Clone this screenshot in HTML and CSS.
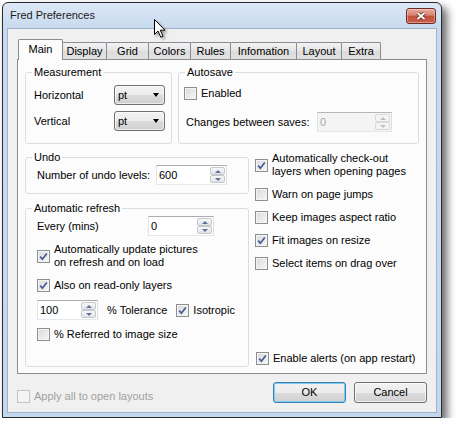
FILE: index.html
```html
<!DOCTYPE html>
<html lang="en">
<head>
    <meta charset="UTF-8">
    <title>Fred Preferences</title>
    <link rel="stylesheet" href="styles.css">
</head>
<body>

<div class="window">
    <div class="titlebar">
        <span class="title">Fred Preferences</span>
        <button type="button" class="close" title="Close">
            <svg width="12" height="10" viewBox="0 0 12 10">
                <path class="x-edge" d="M2.5 2 9.5 8 M9.5 2 2.5 8"/>
                <path class="x-mark" d="M2.5 2 9.5 8 M9.5 2 2.5 8"/>
            </svg>
        </button>
    </div>

    <div class="client">
        <div class="tabs">
            <span class="tab active">Main</span>
            <span class="tab">Display</span>
            <span class="tab">Grid</span>
            <span class="tab">Colors</span>
            <span class="tab">Rules</span>
            <span class="tab">Infomation</span>
            <span class="tab">Layout</span>
            <span class="tab">Extra</span>
        </div>

        <div class="page">
            <div class="top-row">
                <fieldset class="group measurement">
                    <legend>Measurement</legend>
                    <div class="group-body">
                        <div class="field-row">
                            <span>Horizontal</span>
                            <span class="combo">pt</span>
                        </div>
                        <div class="field-row">
                            <span>Vertical</span>
                            <span class="combo">pt</span>
                        </div>
                    </div>
                </fieldset>

                <fieldset class="group autosave">
                    <legend>Autosave</legend>
                    <div class="group-body">
                        <label class="check"><span class="box"></span>Enabled</label>
                        <div class="field-row saves">
                            <span class="saves-label">Changes between saves:</span>
                            <span class="spin disabled saves-spin">
                                <span class="spin-value">0</span>
                                <span class="spin-btns"><span class="spin-up"></span><span class="spin-down"></span></span>
                            </span>
                        </div>
                    </div>
                </fieldset>
            </div>

            <div class="columns">
                <div class="left-col">
                    <fieldset class="group undo">
                        <legend>Undo</legend>
                        <div class="group-body">
                            <div class="field-row">
                                <span class="undo-label">Number of undo levels:</span>
                                <span class="spin undo-spin">
                                    <span class="spin-value">600</span>
                                    <span class="spin-btns"><span class="spin-up"></span><span class="spin-down"></span></span>
                                </span>
                            </div>
                        </div>
                    </fieldset>

                    <fieldset class="group refresh">
                        <legend>Automatic refresh</legend>
                        <div class="group-body">
                            <div class="field-row">
                                <span class="every-label">Every (mins)</span>
                                <span class="spin every-spin">
                                    <span class="spin-value">0</span>
                                    <span class="spin-btns"><span class="spin-up"></span><span class="spin-down"></span></span>
                                </span>
                            </div>
                            <label class="check update-pics">
                                <span class="box"><svg class="tick" viewBox="0 0 11 11"><path d="M2.2 5.6 4.4 8.2 8.8 2.4"/></svg></span>
                                <span>Automatically update pictures<br>on refresh and on load</span>
                            </label>
                            <label class="check readonly">
                                <span class="box"><svg class="tick" viewBox="0 0 11 11"><path d="M2.2 5.6 4.4 8.2 8.8 2.4"/></svg></span>
                                Also on read-only layers
                            </label>
                            <div class="field-row tolerance">
                                <span class="spin tol-spin">
                                    <span class="spin-value">100</span>
                                    <span class="spin-btns"><span class="spin-up"></span><span class="spin-down"></span></span>
                                </span>
                                <span class="tol-label">% Tolerance</span>
                                <label class="check isotropic">
                                    <span class="box"><svg class="tick" viewBox="0 0 11 11"><path d="M2.2 5.6 4.4 8.2 8.8 2.4"/></svg></span>
                                    Isotropic
                                </label>
                            </div>
                            <label class="check">
                                <span class="box"></span>
                                % Referred to image size
                            </label>
                        </div>
                    </fieldset>
                </div>

                <div class="right-col">
                    <label class="check">
                        <span class="box"><svg class="tick" viewBox="0 0 11 11"><path d="M2.2 5.6 4.4 8.2 8.8 2.4"/></svg></span>
                        <span>Automatically check-out<br>layers when opening pages</span>
                    </label>
                    <label class="check"><span class="box"></span>Warn on page jumps</label>
                    <label class="check"><span class="box"></span>Keep images aspect ratio</label>
                    <label class="check">
                        <span class="box"><svg class="tick" viewBox="0 0 11 11"><path d="M2.2 5.6 4.4 8.2 8.8 2.4"/></svg></span>
                        Fit images on resize
                    </label>
                    <label class="check"><span class="box"></span>Select items on drag over</label>
                    <label class="check alerts">
                        <span class="box"><svg class="tick" viewBox="0 0 11 11"><path d="M2.2 5.6 4.4 8.2 8.8 2.4"/></svg></span>
                        Enable alerts (on app restart)
                    </label>
                </div>
            </div>
        </div>

        <div class="footer">
            <label class="check disabled"><span class="box"></span>Apply all to open layouts</label>
            <div class="buttons">
                <button type="button" class="btn default">OK</button>
                <button type="button" class="btn">Cancel</button>
            </div>
        </div>
    </div>
</div>

<svg class="cursor" width="16" height="22" viewBox="0 0 16 22">
    <path d="M1.5 1.5 L1.5 16.5 L5 13 L7.8 19.2 L10 18.2 L7.3 12.2 L12 12.2 Z"/>
</svg>

</body>
</html>
```

FILE: styles.css
```css
body {
    margin: 0;
    background: #fff;
    font-family: "Liberation Sans", Arial, sans-serif;
    font-size: 11px;
    line-height: 13px;
    color: #000;
}

.window {
    box-sizing: border-box;
    width: 440px;
    height: 416px;
    margin: 2px 0 0 2px;
    padding: 0 4px 4px;
    border: 1px solid #2c2c2c;
    border-radius: 6px 6px 0 0;
    background: linear-gradient(#dce8f6, #c8daef 25px, #c3d7ee);
    box-shadow: 5px 5px 8px rgba(0, 0, 0, 0.6);
    display: flex;
    flex-direction: column;
}

.titlebar {
    height: 25px;
    padding-left: 3px;
    display: flex;
    align-items: center;
    justify-content: space-between;
}

.title {
    color: #1a1a1a;
}

.close {
    width: 30px;
    height: 16px;
    margin-right: 1px;
    padding: 0;
    border: 1px solid #6e2a20;
    border-radius: 3px;
    background: linear-gradient(#e9a99a, #d98372 45%, #c4503c 50%, #c85f4b);
    box-shadow: inset 0 0 0 1px rgba(255, 255, 255, 0.35);
    display: flex;
    align-items: center;
    justify-content: center;
}

.close svg {
    display: block;
}

.x-edge {
    fill: none;
    stroke: #5a2018;
    stroke-width: 3.6;
}

.x-mark {
    fill: none;
    stroke: #fff;
    stroke-width: 2;
}

.client {
    flex: 1;
    box-sizing: border-box;
    padding: 10px 9px 0;
    border: 1px solid #a2b4c9;
    background: #f0f0f0;
    display: flex;
    flex-direction: column;
}

/* tabs */

.tabs {
    display: grid;
    grid-template-columns: 44px 44px 42px 42px 40px 66px 45px 39px;
    align-items: end;
    height: 20px;
    padding-left: 1px;
}

.tab {
    box-sizing: border-box;
    height: 17px;
    margin-right: -1px;
    padding-top: 2px;
    border: 1px solid #898c95;
    border-bottom: none;
    border-radius: 2px 2px 0 0;
    background: linear-gradient(#f3f3f3, #e6e6e6 45%, #dcdcdc 55%, #e2e2e2);
    text-align: center;
}

.tab.active {
    position: relative;
    z-index: 1;
    height: 21px;
    margin-bottom: -1px;
    padding-top: 3px;
    background: #fcfcfc;
}

.page {
    box-sizing: border-box;
    height: 315px;
    padding: 6px 7px;
    border: 1px solid #898c95;
    background: #fcfcfc;
    display: flex;
    flex-direction: column;
}

/* group boxes */

.group {
    margin: 0;
    min-width: 0;
    border: 1px solid #d5dfe5;
    border-radius: 3px;
}

.group legend {
    padding: 0 2px;
}

.group-body {
    display: flex;
    flex-direction: column;
}

.top-row {
    display: flex;
    gap: 6px;
}

.measurement {
    width: 147px;
    box-sizing: border-box;
    padding: 6px 6px 12px 8px;
}

.measurement legend {
    margin-left: -2px;
}

.measurement .group-body {
    gap: 6px;
}

.autosave {
    flex: 1;
    padding: 8px 6px 0 5px;
}

.autosave legend {
    margin-left: 1px;
}

.saves {
    margin-top: 12px;
}

.saves-label {
    width: 131px;
    margin-left: 2px;
}

.saves-spin {
    width: 75px;
}

.columns {
    flex: 1;
    margin-top: 7px;
    display: grid;
    grid-template-columns: 224px 1fr;
    column-gap: 6px;
}

.left-col {
    display: flex;
    flex-direction: column;
}

.undo,
.refresh {
    padding: 1px 6px 8px 11px;
}

.undo legend,
.refresh legend {
    margin-left: -5px;
}

.undo {
    margin-bottom: 8px;
}

.refresh {
    flex: 1;
}

.refresh .group-body {
    gap: 8px;
}

.undo-label {
    width: 119px;
}

.undo-spin {
    width: 71px;
}

.every-label {
    width: 111px;
}

.every-spin {
    width: 66px;
}

.refresh .update-pics {
    margin-top: -1px;
}

.refresh .readonly {
    margin-top: 2px;
}

.tol-spin {
    width: 61px;
}

.tol-label {
    margin-left: 9px;
}

.isotropic {
    margin-left: 9px;
}

.right-col {
    padding-top: 1px;
    display: flex;
    flex-direction: column;
    gap: 10px;
}

.right-col .alerts {
    margin-top: auto;
    margin-bottom: 2px;
    padding-left: 1px;
}

.field-row {
    display: flex;
    align-items: center;
}

.measurement .field-row {
    justify-content: space-between;
}

/* controls */

.check {
    display: flex;
    align-items: center;
    gap: 4px;
}

.box {
    flex: none;
    box-sizing: border-box;
    width: 13px;
    height: 13px;
    border: 1px solid #8e8f8f;
    background: linear-gradient(135deg, #d9dadc, #f6f6f6);
    box-shadow: inset 0 0 0 1px #f4f4f4;
}

.tick {
    display: block;
    width: 11px;
    height: 11px;
}

.tick path {
    fill: none;
    stroke: #45589a;
    stroke-width: 1.7;
}

.check.disabled {
    color: #a0a0a0;
}

.check.disabled .box {
    border-color: #c4c4c4;
    background: #f4f4f4;
}

.combo {
    box-sizing: border-box;
    width: 51px;
    height: 20px;
    padding: 0 5px 0 3px;
    border: 1px solid #707070;
    border-radius: 3px;
    background: linear-gradient(#f2f2f2, #ebebeb 50%, #dddddd 51%, #cfcfcf);
    box-shadow: inset 0 0 0 1px rgba(255, 255, 255, 0.6);
    display: flex;
    align-items: center;
    justify-content: space-between;
}

.combo::after {
    content: "";
    border-left: 3.5px solid transparent;
    border-right: 3.5px solid transparent;
    border-top: 4px solid #000;
}

.spin {
    box-sizing: border-box;
    height: 20px;
    border: 1px solid;
    border-color: #abadb3 #dbdfe6 #e3e9ef #e2e3ea;
    background: #fff;
    display: flex;
}

.spin-value {
    flex: 1;
    padding-left: 2px;
    line-height: 18px;
}

.spin-btns {
    width: 15px;
    margin: 1px;
    display: flex;
    flex-direction: column;
}

.spin-btns span {
    flex: 1;
    box-sizing: border-box;
    border: 1px solid #c6c8cc;
    border-radius: 2px;
    background: linear-gradient(#f8f8f8, #e4e4e4);
    display: flex;
    align-items: center;
    justify-content: center;
}

.spin-up::after,
.spin-down::after {
    content: "";
    border-left: 3px solid transparent;
    border-right: 3px solid transparent;
}

.spin-up::after {
    border-bottom: 3px solid #5d71a3;
}

.spin-down::after {
    border-top: 3px solid #5d71a3;
}

.spin.disabled {
    border-color: #b4b7bc #dcdfe3 #e3e6ea #e0e2e6;
    background: #f4f4f4;
    color: #a8a8a8;
}

.spin.disabled .spin-btns span {
    border-color: #d9d9d9;
    background: #f4f4f4;
}

.spin.disabled .spin-up::after {
    border-bottom-color: #b9c0cc;
}

.spin.disabled .spin-down::after {
    border-top-color: #b9c0cc;
}

/* footer */

.footer {
    margin-top: 8px;
    display: flex;
    align-items: flex-end;
    justify-content: space-between;
}

.buttons {
    display: flex;
    gap: 8px;
}

.btn {
    box-sizing: border-box;
    width: 73px;
    height: 21px;
    padding: 0;
    font: inherit;
    color: #000;
    border: 1px solid #707070;
    border-radius: 3px;
    background: linear-gradient(#f2f2f2, #ebebeb 50%, #dddddd 51%, #cfcfcf);
    box-shadow: inset 0 0 0 1px rgba(255, 255, 255, 0.7);
}

.btn.default {
    border-color: #3c7fb1;
    box-shadow: inset 0 0 0 1px #7ccbf1;
}

.cursor {
    position: absolute;
    left: 153px;
    top: 18px;
    filter: drop-shadow(2px 2px 1.5px rgba(0, 0, 0, 0.35));
}

.cursor path {
    fill: #fff;
    stroke: #000;
    stroke-width: 1;
    stroke-linejoin: miter;
}
```
